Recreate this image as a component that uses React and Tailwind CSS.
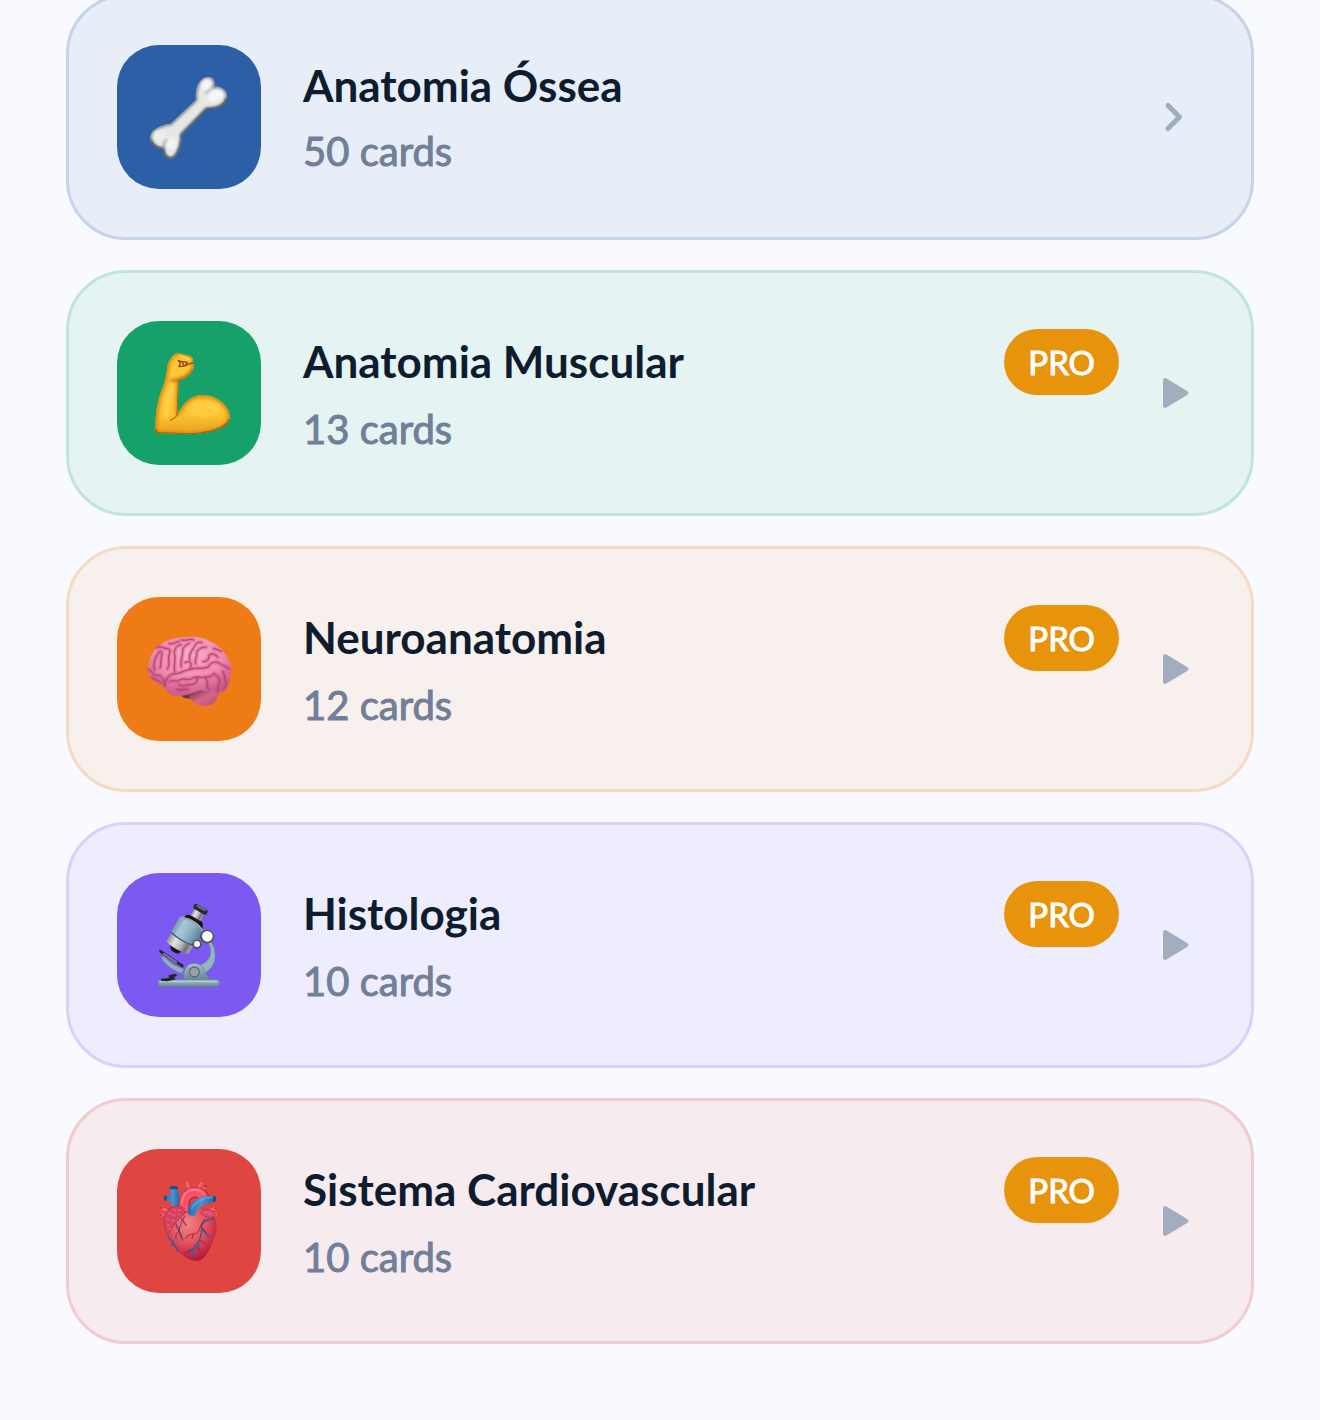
const BoneIcon = () => (
  <svg viewBox="21 21 432 432" className="size-full" aria-hidden="true">
    <defs>
      <clipPath id="bone-clip">
        <path d="M258 186C254 150 268 118 294 117C309 117 316 128 313 146C334 144 352 158 352 177C350 200 322 216 292 213L215 290C218 312 208 345 192 360C178 367 158 358 158 333C138 333 121 319 120 300C122 276 145 263 182 257Z" />
      </clipPath>
      <filter id="bone-blur" x="-30%" y="-30%" width="160%" height="160%">
        <feGaussianBlur stdDeviation="5" />
      </filter>
    </defs>
    <g clipPath="url(#bone-clip)">
      <rect x="100" y="100" width="270" height="280" fill="#e6e8e8" />
      <path d="M258 186C254 150 268 118 294 117C309 117 316 128 313 146C334 144 352 158 352 177C350 200 322 216 292 213L215 290C218 312 208 345 192 360C178 367 158 358 158 333C138 333 121 319 120 300C122 276 145 263 182 257Z" fill="none" stroke="#6a6c70" strokeWidth="8" filter="url(#bone-blur)" />
      <path d="M352 180C350 202 322 218 292 215L217 292C220 312 210 347 192 362C178 369 156 358 158 335C140 335 125 325 120 306" fill="none" stroke="#333" strokeWidth="9" filter="url(#bone-blur)" />
      <path d="M313 146C304 148 294 156 288 166M158 333C160 320 164 312 170 304" fill="none" stroke="#8a8a8a" strokeWidth="5" filter="url(#bone-blur)" />
      <ellipse cx="289" cy="140" rx="14" ry="17" transform="rotate(20 289 140)" fill="#f6f7fb" filter="url(#bone-blur)" />
      <ellipse cx="316" cy="173" rx="24" ry="14" transform="rotate(-25 316 173)" fill="#f6f8fc" filter="url(#bone-blur)" />
      <ellipse cx="149" cy="292" rx="18" ry="13" fill="#eeeeee" filter="url(#bone-blur)" />
      <ellipse cx="185" cy="317" rx="13" ry="18" transform="rotate(20 185 317)" fill="#f4f4f4" filter="url(#bone-blur)" />
    </g>
  </svg>
);

const ArmIcon = () => (
  <svg viewBox="21 21 432 432" className="size-full" aria-hidden="true">
    <defs>
      <linearGradient id="arm-fill" x1="0" y1="0" x2="0" y2="1">
        <stop offset="0" stopColor="#ffc83a" />
        <stop offset="0.75" stopColor="#fcc233" />
        <stop offset="1" stopColor="#e59a1c" />
      </linearGradient>
      <clipPath id="arm-clip">
        <path d="M173 152C177 140 188 119 204 117L238 125C249 129 252 138 247 147C253 151 252 160 249 166C242 182 230 194 206 198L202 303C214 278 236 244 278 243C320 243 358 275 360 308C358 338 320 355 240 361L142 357C132 354 133 345 136 335C137 290 145 250 160 215C168 195 170 172 173 152Z" />
      </clipPath>
      <filter id="arm-blur" x="-30%" y="-30%" width="160%" height="160%">
        <feGaussianBlur stdDeviation="5" />
      </filter>
    </defs>
    <g clipPath="url(#arm-clip)">
      <rect x="120" y="100" width="250" height="270" fill="url(#arm-fill)" />
      <path d="M173 152C177 140 188 119 204 117L238 125C249 129 252 138 247 147C253 151 252 160 249 166C242 182 230 194 206 198L202 303C214 278 236 244 278 243C320 243 358 275 360 308C358 338 320 355 240 361L142 357C132 354 133 345 136 335C137 290 145 250 160 215C168 195 170 172 173 152Z" fill="none" stroke="#d98a10" strokeWidth="13" filter="url(#arm-blur)" />
      <path d="M182 196C190 202 198 201 210 198C232 192 242 180 249 166" fill="none" stroke="#b86c10" strokeWidth="7" filter="url(#arm-blur)" />
      <ellipse cx="285" cy="285" rx="48" ry="25" fill="#ffcf48" filter="url(#arm-blur)" opacity="0.7" />
      <path d="M182 215L166 310" stroke="#ffd452" strokeWidth="14" filter="url(#arm-blur)" opacity="0.8" />
      <path d="M206 198L202 304" stroke="#9b5a0a" strokeWidth="4" />
      <path d="M136 346L142 357L240 361C300 358 350 342 359 315" fill="none" stroke="#a85c0c" strokeWidth="6" />
      <path d="M202 302C196 312 190 316 180 318" fill="none" stroke="#c27610" strokeWidth="4" />
    </g>
    <path d="M205 139C212 146 222 143 229 144M205 139L211 148L207 158L224 156L239 149L248 148M217 145L221 152M232 145L227 153" fill="none" stroke="#8a4a10" strokeWidth="4" strokeLinecap="round" strokeLinejoin="round" />
    <path d="M209 125L234 133L242 138" fill="none" stroke="#ffd657" strokeWidth="5" strokeLinecap="round" />
  </svg>
);

const BrainIcon = () => (
  <svg viewBox="21 21 432 432" className="size-full" aria-hidden="true">
    <defs>
      <radialGradient id="brain-fill" cx="0.48" cy="0.3" r="0.65">
        <stop offset="0" stopColor="#ffb0c9" />
        <stop offset="0.6" stopColor="#f48fb1" />
        <stop offset="1" stopColor="#cd5f8c" />
      </radialGradient>
      <linearGradient id="brain-stem" x1="0" y1="0" x2="1" y2="1">
        <stop offset="0" stopColor="#6d2c40" />
        <stop offset="0.5" stopColor="#d5688a" />
        <stop offset="1" stopColor="#b54b73" />
      </linearGradient>
      <filter id="brain-blur">
        <feGaussianBlur stdDeviation="3" />
      </filter>
      <path id="brain-folds" d="M116 238C130 244 126 256 140 256C154 254 162 266 164 288M164 288C168 266 176 254 190 252C210 252 220 242 240 238C262 232 284 238 296 230C300 218 316 212 328 220C338 228 348 226 358 238M134 240C128 218 136 204 146 188C150 180 158 184 156 194C150 208 156 220 150 234M166 176C176 172 184 180 178 192C172 208 182 222 172 238M194 244C190 226 198 208 194 192C190 180 200 164 214 164M214 232C208 214 220 198 218 184C216 176 226 164 238 160M224 218C240 210 250 220 240 232M240 210C232 192 250 180 256 164C260 156 270 156 276 158M258 222C250 210 264 200 260 188C262 176 278 170 290 172M278 214C290 218 300 206 296 196C304 188 318 192 324 202M140 174C150 166 160 172 166 176M176 160C190 168 196 152 208 154M214 150C228 154 240 144 252 150M310 176C318 174 322 180 334 184M178 276C188 266 196 278 206 272C222 260 232 274 244 266C258 256 268 264 280 262C292 258 302 266 312 250M262 262C264 276 254 284 240 284C226 282 218 294 206 284M198 298C210 302 224 296 234 298M288 264C296 278 288 292 296 300M312 250C322 262 334 264 328 278C322 290 328 298 322 306M338 244C346 252 342 264 348 276C350 286 342 294 338 300M126 262C136 274 146 266 152 278" />
    </defs>
    <path d="M206 312C222 326 232 328 246 324L258 305Z" fill="#6b3440" />
    <path d="M236 318C240 300 270 294 326 306C328 328 308 348 284 348C262 348 246 336 236 318Z" fill="url(#brain-stem)" />
    <path d="M115 244C112 216 124 188 140 172C160 152 196 142 232 141C258 138 284 143 302 155C326 164 346 186 352 204C366 222 368 244 360 260C362 286 346 308 322 309C304 312 286 300 268 302C246 308 222 320 198 318C180 318 166 304 164 288C144 286 118 268 115 244Z" fill="url(#brain-fill)" />
    <g fill="none" strokeLinecap="round" strokeLinejoin="round">
      <use href="#brain-folds" stroke="#c0487c" strokeWidth="7" filter="url(#brain-blur)" opacity="0.8" />
      <use href="#brain-folds" stroke="#a83d6b" strokeWidth="3" opacity="0.85" />
    </g>
  </svg>
);

const MicroscopeIcon = () => (
  <svg viewBox="21 21 432 432" className="size-full" aria-hidden="true">
    <defs>
      <linearGradient id="scope-tube" x1="0" y1="0" x2="1" y2="0">
        <stop offset="0" stopColor="#6f9ab2" />
        <stop offset="0.25" stopColor="#a6c8d9" />
        <stop offset="0.6" stopColor="#8eb2c6" />
        <stop offset="1" stopColor="#5c8198" />
      </linearGradient>
      <linearGradient id="scope-metal" x1="0" y1="0" x2="1" y2="0">
        <stop offset="0" stopColor="#8a9198" />
        <stop offset="0.3" stopColor="#e6e3e3" />
        <stop offset="0.6" stopColor="#b5b3b6" />
        <stop offset="0.8" stopColor="#6f7278" />
        <stop offset="1" stopColor="#a5a9ad" />
      </linearGradient>
      <linearGradient id="scope-base" x1="0" y1="0" x2="0" y2="1">
        <stop offset="0" stopColor="#a4c2cf" />
        <stop offset="1" stopColor="#668796" />
      </linearGradient>
    </defs>
    <path d="M284 222C302 232 308 258 296 278C290 288 282 292 270 298L284 322C306 308 318 288 315 262C314 242 304 226 292 218Z" fill="#94b4c2" stroke="#6b8998" strokeWidth="2" />
    <path d="M153 270C156 290 184 312 216 323L222 308C198 302 178 290 166 274Z" fill="#91aebc" stroke="#657f8e" strokeWidth="2" />
    <path d="M220 342C218 320 226 292 252 292C270 292 280 304 286 320C290 330 296 336 304 342Z" fill="url(#scope-base)" stroke="#66818f" strokeWidth="2" />
    <rect x="144" y="341" width="184" height="21" rx="8" fill="url(#scope-base)" stroke="#5e7b89" strokeWidth="2" />
    <path d="M150 347H320" stroke="#b7cfd9" strokeWidth="3" />
    <circle cx="253" cy="318" r="15" fill="#999fa3" stroke="#5e6b72" strokeWidth="4" />
    <path d="M151 339L177 335L176 328L195 323L202 328L192 334L197 340L173 346L154 345Z" fill="#222529" />
    <path d="M149 250L221 297L219 306L148 259Z" fill="#24282e" />
    <path d="M160 262L201 290" stroke="#899199" strokeWidth="5" />
    <g transform="rotate(30 230 200)">
      <path d="M202 248H248L240 266C232 272 218 271 211 265Z" fill="#17191c" />
      <path d="M190 220H266V252C256 260 198 260 190 252Z" fill="url(#scope-metal)" />
      <path d="M188 172C200 158 256 158 270 172V223C248 231 212 231 188 223Z" fill="url(#scope-tube)" />
      <path d="M188 222C212 229 248 229 269 222" fill="none" stroke="#3f596b" strokeWidth="4" />
      <path d="M194 164C212 150 250 150 266 164L270 174C246 163 216 163 188 174Z" fill="#a4a0a4" />
      <path d="M202 156C216 142 246 142 259 153L266 167C246 156 220 156 200 163Z" fill="#15171a" />
      <rect x="214" y="121" width="34" height="28" fill="url(#scope-metal)" />
      <rect x="208" y="110" width="46" height="17" rx="7" fill="#292b2e" />
      <ellipse cx="231" cy="114" rx="17" ry="4" fill="#6b6a6c" />
    </g>
    <circle cx="291" cy="212" r="21" fill="#4f545a" />
    <circle cx="292" cy="211" r="16" fill="#fff" />
    <circle cx="261" cy="235" r="14" fill="#4f545a" />
    <circle cx="261" cy="234" r="9" fill="#fff" />
  </svg>
);

const HeartIcon = () => (
  <svg viewBox="21 21 432 432" className="size-full" aria-hidden="true">
    <defs>
      <radialGradient id="heart-fill" cx="0.42" cy="0.3" r="0.72">
        <stop offset="0" stopColor="#f58282" />
        <stop offset="0.5" stopColor="#e2545c" />
        <stop offset="1" stopColor="#b3143a" />
      </radialGradient>
      <linearGradient id="heart-vein" x1="0" y1="0" x2="1" y2="0">
        <stop offset="0" stopColor="#286aad" />
        <stop offset="0.5" stopColor="#4994d4" />
        <stop offset="1" stopColor="#25619e" />
      </linearGradient>
    </defs>
    <g fill="none" stroke="#f0646c" strokeWidth="9">
      <path d="M230 119L238 146M276 121L262 146M290 131L272 150M153 198L174 208M150 219H172M298 206L317 199M302 218L321 216" />
    </g>
    <g fill="#b3283a">
      <circle cx="287" cy="133" r="4" />
      <circle cx="154" cy="198" r="3" />
      <circle cx="152" cy="219" r="3" />
      <circle cx="316" cy="199" r="3" />
    </g>
    <path d="M178 138L204 135L212 195L184 194L186 179L166 177C161 174 161 162 167 160L184 159Z" fill="url(#heart-vein)" />
    <ellipse cx="191" cy="137" rx="13" ry="5" fill="#174f86" />
    <ellipse cx="166" cy="168" rx="4" ry="8" fill="#1c5288" />
    <path d="M174 276C166 250 180 216 212 203C240 192 282 198 306 216C323 232 324 260 314 282C304 312 292 344 270 355C248 362 218 344 200 324C184 308 176 294 174 276Z" fill="url(#heart-fill)" />
    <path d="M226 212C218 184 226 150 256 151C272 152 282 160 284 176" fill="none" stroke="#b02339" strokeWidth="32" />
    <path d="M224 210C217 182 226 150 255 150C270 150 279 158 282 172" fill="none" stroke="#f5536a" strokeWidth="27" />
    <path d="M216 182C218 154 236 142 256 143C268 144 276 149 281 156" fill="none" stroke="#ff8593" strokeWidth="6" strokeLinecap="round" opacity="0.7" />
    <path d="M315 162C278 158 238 174 232 211C236 222 247 224 256 219C264 196 282 184 314 180Z" fill="url(#heart-vein)" />
    <path d="M308 166C280 165 252 180 244 202" fill="none" stroke="#68abe0" strokeWidth="5" opacity="0.7" />
    <ellipse cx="314" cy="171" rx="4" ry="9" fill="#184c80" />
    <path d="M164 220C170 202 188 190 206 192C220 196 228 208 222 217C206 230 188 252 174 278C162 262 160 238 164 220Z" fill="#d8405f" stroke="#a72743" strokeWidth="2" />
    <path d="M272 212C280 200 296 198 310 210C318 218 316 226 304 226C292 224 278 224 272 212Z" fill="#e34c69" stroke="#b32745" strokeWidth="2" />
    <g fill="none" stroke="#ef7286" strokeWidth="3" strokeLinecap="round">
      <path d="M176 214l7 2M190 202l7 3M206 204l6 2M170 230l6 3M188 218l7 3M204 216l6 3M172 248l6 2M186 234l6 3M178 260l4 2M284 210l6 1M298 214l5 2" />
    </g>
    <g fill="none" stroke="#325c94" strokeWidth="4" strokeLinecap="round" strokeLinejoin="round">
      <path d="M312 231C294 232 280 236 277 248C272 270 276 290 262 304C252 314 248 328 250 346M276 262C286 272 288 280 300 284M264 302L268 324M252 320L237 324L236 336" />
      <path d="M198 246C202 262 212 270 218 294M214 230C220 238 224 244 229 250M174 282C182 296 196 306 203 328M190 298L186 310" />
    </g>
    <g fill="none" stroke="#a9203b" strokeWidth="3" strokeLinecap="round" strokeLinejoin="round">
      <path d="M224 222C216 242 206 252 208 272L214 288M208 266L198 278V290M284 232C270 246 270 266 260 274L234 280L228 290M272 254L290 272M248 278L246 290M268 294L284 304M244 328C232 326 226 336 222 330M260 314L274 334" />
    </g>
  </svg>
);

const ChevronIcon = () => (
  <svg viewBox="0 0 42 42" className="size-[42px] shrink-0 text-[#a0adc0]" aria-hidden="true">
    <path d="M7 9.5L18.5 21L7 32.5" fill="none" stroke="currentColor" strokeWidth="5" strokeLinecap="round" strokeLinejoin="round" />
  </svg>
);

const PlayIcon = () => (
  <svg viewBox="0 0 42 42" className="size-[42px] shrink-0 text-[#a2adc0]" aria-hidden="true">
    <path d="M4 8L25.5 21L4 34Z" fill="currentColor" stroke="currentColor" strokeWidth="4" strokeLinejoin="round" />
  </svg>
);

const decks = [
  { title: "Anatomia Óssea", cards: 50, pro: false, Icon: BoneIcon, card: "bg-[#e7eef8] border-[#c5d4ea]", tile: "bg-[#2d5fa6]" },
  { title: "Anatomia Muscular", cards: 13, pro: true, Icon: ArmIcon, card: "bg-[#e5f3f2] border-[#bfe5da]", tile: "bg-[#16a06a]" },
  { title: "Neuroanatomia", cards: 12, pro: true, Icon: BrainIcon, card: "bg-[#f8f0ed] border-[#f6dac3]", tile: "bg-[#ee7b16]" },
  { title: "Histologia", cards: 10, pro: true, Icon: MicroscopeIcon, card: "bg-[#eeedfd] border-[#d7d1fb]", tile: "bg-[#7c5af1]" },
  { title: "Sistema Cardiovascular", cards: 10, pro: true, Icon: HeartIcon, card: "bg-[#f6ebef] border-[#f1cbcf]", tile: "bg-[#e04641]" },
];

function DeckCard({ title, cards, pro, Icon, card, tile }) {
  return (
    <button
      type="button"
      className={`flex w-full items-center gap-[42px] rounded-[60px] border-[3px] p-12 text-left ${card}`}
    >
      <span className={`size-36 shrink-0 overflow-hidden rounded-[42px] ${tile}`}>
        <Icon />
      </span>
      <span className="flex min-w-0 flex-1 flex-col gap-1.5">
        <span className="flex items-center justify-between gap-6">
          <span className="text-[44px] leading-[63px] font-bold text-[#0d1c2f]">{title}</span>
          {pro && (
            <span className="rounded-[33px] bg-[#e8930c] px-6 py-3 text-[33px] leading-[42px] text-white [-webkit-text-stroke:1px_currentColor]">
              PRO
            </span>
          )}
        </span>
        <span className="text-[40px] leading-[57px] text-[#717f98] [-webkit-text-stroke:1px_currentColor]">
          {cards} cards
        </span>
      </span>
      {pro ? <PlayIcon /> : <ChevronIcon />}
    </button>
  );
}

export default function App() {
  return (
    <main className="min-h-screen overflow-hidden bg-[#f8faff] px-[66px] pb-[76px] font-['Lato',sans-serif]">
      <div className="-mt-1.5 flex flex-col gap-[30px]">
        {decks.map((deck) => (
          <DeckCard key={deck.title} {...deck} />
        ))}
      </div>
    </main>
  );
}
